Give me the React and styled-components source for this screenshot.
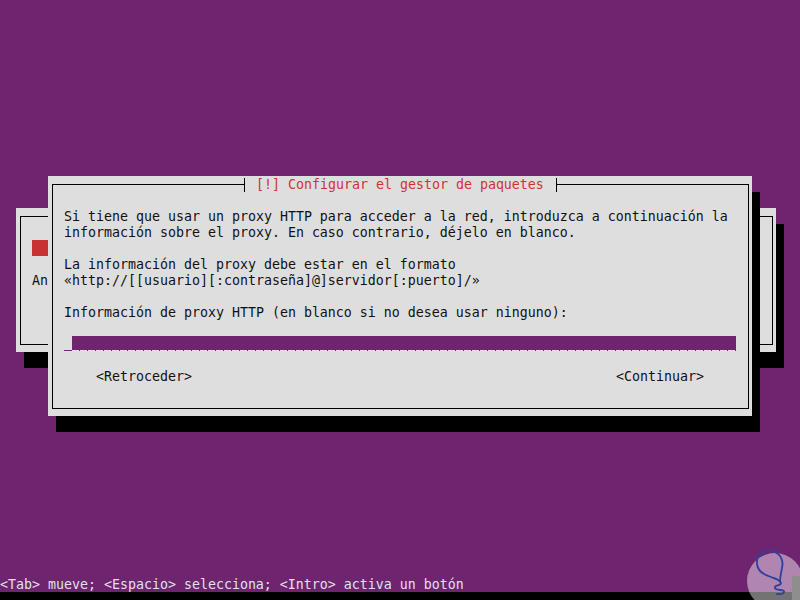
import React from 'react'
import styled, { createGlobalStyle } from 'styled-components'

const purple = '#6f2470';
const gray = '#dedede';
const red = '#cc3333';

const GlobalStyle = createGlobalStyle`
    html, body {
        margin:0;
        padding:0;
        background:${purple};
        overflow:hidden;
    }
    * { box-sizing:border-box; }
`;

const Screen = styled.div`
    position:relative;
    width:800px;
    height:600px;
    background:${purple};
    display:flex;
    flex-direction:column;
    font-family:"DejaVu Sans Mono", "Liberation Mono", monospace;
    font-size:13.29px;
    line-height:15px;
    color:#111;
    overflow:hidden;
`;

const Desktop = styled.div`
    position:relative;
    flex:1;
`;

const Window = styled.div`
    position:absolute;
    left:${p => p.$x}px;
    top:${p => p.$y}px;
    width:${p => p.$w}px;
    height:${p => p.$h}px;
    background:${gray};
    padding:8px 3px 7px 4px;
    box-shadow:8px 16px 0 #000;
`;

const Frame = styled.div`
    position:relative;
    height:100%;
    border:1px solid #000;
`;

const Title = styled.div`
    position:absolute;
    top:-9px;
    left:${p => p.$left}px;
    display:flex;
    height:16px;
`;

const Tee = styled.span`
    position:relative;
    width:8px;
    height:16px;
    background:${p => p.$side === 'left'
        ? `linear-gradient(to right, transparent 4px, ${gray} 4px)`
        : `linear-gradient(to right, ${gray} 4px, transparent 4px)`};
    &::after{
        content:'';
        position:absolute;
        left:4px;
        top:2px;
        bottom:0;
        width:1px;
        background:#000;
    }
`;

const TitleText = styled.span`
    background:${gray};
    color:${red};
    white-space:pre;
    width:304px;
    padding-top:1px;
`;

const Body = styled.div`
    padding:23px 0 0 11px;
    display:flex;
    flex-direction:column;
`;

const Line = styled.div`
    height:16px;
    padding-top:1px;
    white-space:pre;
`;

const Progress = styled.div`
    width:16px;
    height:16px;
    background:#c83232;
`;

const EntryRow = styled.div`
    display:flex;
    height:16px;
`;

const Cursor = styled.span`
    width:8px;
    height:15px;
    border-bottom:1px solid ${purple};
`;

const Field = styled.span`
    width:664px;
    height:15px;
    background:
        repeating-linear-gradient(to right, #e4e4e4 0 7px, ${purple} 7px 8px) bottom / 100% 1px no-repeat,
        ${purple};
`;

const ButtonRow = styled.div`
    display:flex;
    gap:424px;
    height:16px;
    padding:1px 0 0 32px;
    white-space:pre;
`;

const StatusBar = styled.div`
    height:16px;
    padding-top:1px;
    color:#e2e2e2;
    white-space:pre;
`;

const BlackStrip = styled.div`
    height:8px;
    background:#000;
`;

const Watermark = styled.svg`
    position:absolute;
    left:740px;
    top:530px;
`;

const Logo = () => (
    <Watermark width="60" height="70" viewBox="0 0 60 70">
        <circle cx="35" cy="51" r="28" fill="#fff" fillOpacity="0.45" />
        <rect x="52" y="46" width="8" height="24" fill="#8e8e8e" />
        <path
            d="M40 52 C40 46 41 44 42 38 C44 30 40 22 31 21 C22 20 16 27 17 34 C18 42 24 45 31 47 C36 49 40 50 41 53 C41 56 34 55 35 58 C36 61 45 59 44 62 C43 65 38 64 37 64"
            fill="none"
            stroke="#2f3f9f"
            strokeWidth="1.8"
            strokeLinecap="round"
        />
    </Watermark>
);

const App = () => {
    return (
        <>
            <GlobalStyle />
            <Screen>
                <Desktop>
                    <Window $x={16} $y={208} $w={760} $h={144}>
                        <Frame>
                            <Body>
                                <Progress />
                                <Line> </Line>
                                <Line>Analizando el disco...</Line>
                            </Body>
                        </Frame>
                    </Window>
                    <Window $x={48} $y={176} $w={704} $h={240}>
                        <Frame>
                            <Title $left={187}>
                                <Tee $side="left" />
                                <TitleText> [!] Configurar el gestor de paquetes </TitleText>
                                <Tee $side="right" />
                            </Title>
                            <Body>
                                <Line>Si tiene que usar un proxy HTTP para acceder a la red, introduzca a continuación la</Line>
                                <Line>información sobre el proxy. En caso contrario, déjelo en blanco.</Line>
                                <Line> </Line>
                                <Line>La información del proxy debe estar en el formato</Line>
                                <Line>«http://[[usuario][:contraseña]@]servidor[:puerto]/»</Line>
                                <Line> </Line>
                                <Line>Información de proxy HTTP (en blanco si no desea usar ninguno):</Line>
                                <Line> </Line>
                                <EntryRow>
                                    <Cursor />
                                    <Field />
                                </EntryRow>
                                <Line> </Line>
                                <ButtonRow>
                                    <span>&lt;Retroceder&gt;</span>
                                    <span>&lt;Continuar&gt;</span>
                                </ButtonRow>
                            </Body>
                        </Frame>
                    </Window>
                </Desktop>
                <StatusBar>&lt;Tab&gt; mueve; &lt;Espacio&gt; selecciona; &lt;Intro&gt; activa un botón</StatusBar>
                <BlackStrip />
                <Logo />
            </Screen>
        </>
    )
}

export default App
